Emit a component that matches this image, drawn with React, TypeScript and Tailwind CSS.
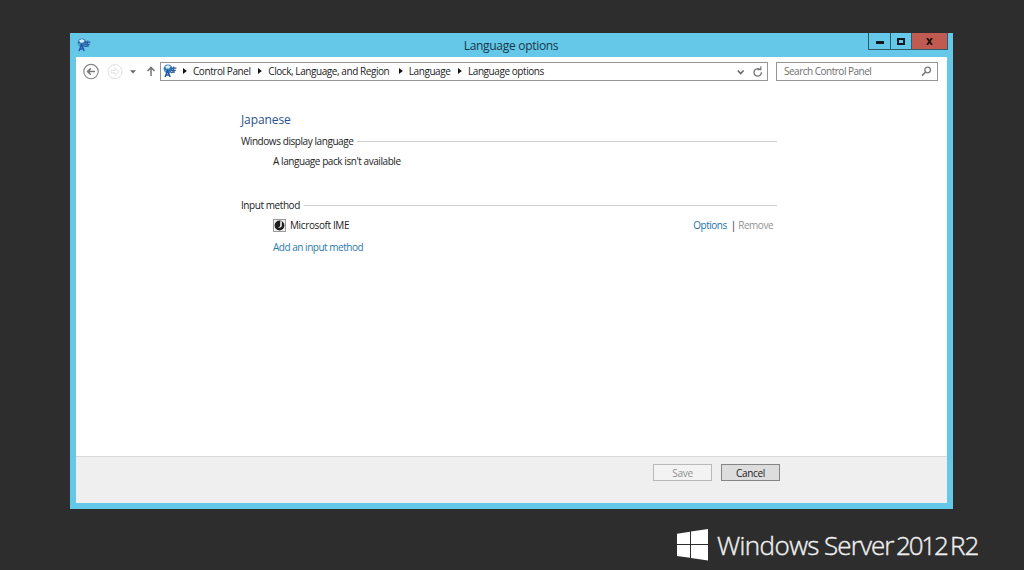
import type { ReactNode } from "react";

function GlobeIcon() {
  return (
    <svg width="14" height="14" viewBox="0 0 14 14" className="block shrink-0">
      <circle cx="5" cy="4.8" r="4.4" fill="#2f78b4" />
      <path d="M2 2.6 L5 1 L7.6 2.4 L6.4 4.6 L3.4 4.8 Z" fill="#d3ecf1" />
      <path d="M1.2 5.4 L3 6.2 L2.4 7.8 Z" fill="#8fc7d8" />
      <path d="M2 13 L4.6 7 L7.2 13 M2.9 10.9 H6.3" fill="none" stroke="#2458a5" strokeWidth="1.5" />
      <path d="M7.4 4.2 H13.4 M8 6.3 H12.8 M10.8 2.6 L9.8 8.2 M7.6 8.6 L12 7.8" fill="none" stroke="#2d5c9e" strokeWidth="1.3" />
    </svg>
  );
}

function Crumb({ width, children }: { width: string; children: ReactNode }) {
  return (
    <>
      <svg width="4" height="6" viewBox="0 0 4 6" className="mr-[6px] shrink-0">
        <path d="M0 0 L3.8 3 L0 6 Z" fill="#111" />
      </svg>
      <span className={`${width} mr-[7px] shrink-0`}>{children}</span>
    </>
  );
}

function Section({ title, children }: { title: string; children?: ReactNode }) {
  return (
    <section>
      <div className="flex h-[14px] items-center">
        <h2 className="shrink-0">{title}</h2>
        <div className="ml-1 h-px flex-1 bg-[#d0d0d0]" />
      </div>
      {children}
    </section>
  );
}

export default function App() {
  return (
    <div className="flex h-[570px] w-[1024px] flex-col overflow-hidden bg-[#2d2d2d] pt-[33px] font-['Open_Sans','Noto_Sans',sans-serif] text-[10px] leading-[14px] tracking-[-0.43px] whitespace-nowrap text-[#222]">
      <div className="ml-[70px] flex h-[476px] w-[883px] shrink-0 flex-col bg-[#65c8e8] px-[6px] pb-[6px]">
        <header className="flex h-6 shrink-0 items-start">
          <div className="mt-[5px] w-[100px] pl-px">
            <GlobeIcon />
          </div>
          <h1 className="mt-[4px] flex-1 text-center text-[12px] leading-[18px] tracking-[-0.3px] text-[#163748]">Language options</h1>
          <div className="mr-[-1px] ml-[22px] flex h-[17px] w-[80px] border border-t-0 border-[#2e5968]">
            <div className="flex w-[22px] items-center justify-center border-r border-[#2e5968] pt-[3px]">
              <div className="h-[3px] w-[8px] bg-[#101820]" />
            </div>
            <div className="flex w-[21px] items-center justify-center border-r border-[#2e5968]">
              <div className="h-[7px] w-[8px] border-2 border-[#101820]" />
            </div>
            <div className="flex flex-1 items-center justify-center bg-[#c15a50]">
              <svg width="7" height="7" viewBox="0 0 7 7">
                <path d="M1 0 L6 7 M6 0 L1 7" stroke="#1a1010" strokeWidth="1.8" />
              </svg>
            </div>
          </div>
        </header>

        <main className="flex flex-1 flex-col bg-white">
          <nav className="flex h-[29px] shrink-0 items-center pl-[7px]">
            <svg width="80" height="18" viewBox="0 0 80 18" fill="none" className="shrink-0">
              <circle cx="8" cy="8.6" r="7.2" stroke="#858585" strokeWidth="1.1" />
              <path d="M12 8.6 H4.8 M7.8 5.4 L4.6 8.6 L7.8 11.8" stroke="#777" strokeWidth="1.5" />
              <circle cx="32" cy="8.6" r="7" stroke="#dedede" />
              <path d="M28 7.4 H32 V5.1 L36 8.6 L32 12.1 V9.8 H28 Z" stroke="#d9d9d9" strokeWidth="0.8" />
              <path d="M47 7.2 H53 L50 10.4 Z" fill="#666" />
              <path d="M68 13.1 V4.9 M64.5 8 L68 4.4 L71.5 8" stroke="#757575" strokeWidth="1.5" />
            </svg>
            <div className="ml-[-3px] flex h-[19px] w-[608px] shrink-0 items-center border border-[#959595] pl-[2px]">
              <div className="pb-px">
                <GlobeIcon />
              </div>
              <div className="ml-[6px] flex items-center pb-[2px]">
                <Crumb width="w-[58.3px]">Control Panel</Crumb>
                <Crumb width="w-[123.5px]">Clock, Language, and Region</Crumb>
                <Crumb width="w-[42.2px]">Language</Crumb>
                <Crumb width="w-[76px]">Language options</Crumb>
              </div>
              <svg width="28" height="12" viewBox="0 0 28 12" fill="none" className="mr-[4px] ml-auto shrink-0">
                <path d="M2.8 4.4 L5.7 7.6 L8.6 4.4" stroke="#666" strokeWidth="1.5" />
                <path d="M25 3.5 A3.7 3.7 0 1 0 26.4 6.2 M22.4 3.6 H25.8 V0.4" stroke="#777" strokeWidth="1.3" />
              </svg>
            </div>
            <div className="ml-2 flex h-[19px] w-[162px] shrink-0 items-center border border-[#959595] pr-[5px] pb-[1px] pl-[7px] text-[#6e6e6e]">
              <span className="pb-px tracking-[-0.5px]">Search Control Panel</span>
              <svg width="11" height="11" viewBox="0 0 11 11" fill="none" className="ml-auto">
                <circle cx="6.6" cy="4" r="2.8" stroke="#777" strokeWidth="1.3" />
                <path d="M4.6 6 L1 9.6" stroke="#777" strokeWidth="1.6" />
              </svg>
            </div>
          </nav>

          <div className="ml-[165px] w-[536px] flex-1 pt-[25px]">
            <p className="mb-[5px] text-[12px] leading-[18px] tracking-[-0.1px] text-[#27528b]">Japanese</p>
            <Section title="Windows display language">
              <p className="mt-[6px] ml-[32px]">A language pack isn't available</p>
            </Section>
            <div className="h-[30px]" />
            <Section title="Input method">
              <div className="mt-[6px] ml-[32px] flex items-center pr-[4px]">
                <svg width="13" height="13" viewBox="0 0 13 13" className="mr-[4px]">
                  <rect x="0.5" y="0.5" width="12" height="12" fill="#f4f4f4" stroke="#999" />
                  <circle cx="6.5" cy="6.5" r="4.9" fill="#202020" />
                  <path d="M7.2 2.2 V6.5 Q7.2 8.2 5 8.6 Q8.8 9 8.8 6.5 V2.2 Z" fill="#f4f4f4" />
                </svg>
                <span className="tracking-[-0.38px]">Microsoft IME</span>
                <span className="ml-auto tracking-[-0.5px] text-[#2372ad]">Options</span>
                <span className="mr-[2.5px] ml-[4px]">|</span>
                <span className="tracking-[-0.5px] text-[#929292]">Remove</span>
              </div>
              <p className="mt-[8px] ml-[32px] tracking-[-0.48px] text-[#2b7aae]">Add an input method</p>
            </Section>
          </div>

          <footer className="flex h-[47px] shrink-0 items-start justify-end gap-[9px] border-t border-[#d9d9d9] bg-[#efefef] pt-[7px] pr-[167px]">
            <button className="h-[17px] w-[59px] border border-[#b9b9b9] bg-[#f3f3f3] pt-px leading-[14px] tracking-[-0.25px] text-[#8e8e8e]">Save</button>
            <button className="h-[17px] w-[59px] border border-[#858585] bg-[#dddddd] pt-px leading-[14px] tracking-[-0.3px] text-[#222]">Cancel</button>
          </footer>
        </main>
      </div>

      <div className="mt-[20px] ml-[677px] flex h-[32px] items-center">
        <svg width="31" height="32" viewBox="0 0 31 32" className="shrink-0">
          <path d="M0 4.8 L13 2.7 V15 H0 Z M14 2.5 L31 0 V15 H14 Z M0 16 H13 V28.8 L0 27 Z M14 16 H31 V31.5 L14 29 Z" fill="#fff" />
        </svg>
        <p className="ml-[9px] flex text-[26px] leading-[32px] font-light text-[#f0f0f0] [-webkit-text-stroke:0.4px_#f0f0f0]">
          <span className="w-[107px] tracking-[-0.6px]">Windows </span>
          <span className="w-[72px] tracking-[-0.9px]">Server </span>
          <span className="w-[54px] tracking-[-2.2px]">2012 </span>
          <span className="tracking-[-1px]">R2</span>
        </p>
      </div>
    </div>
  );
}
